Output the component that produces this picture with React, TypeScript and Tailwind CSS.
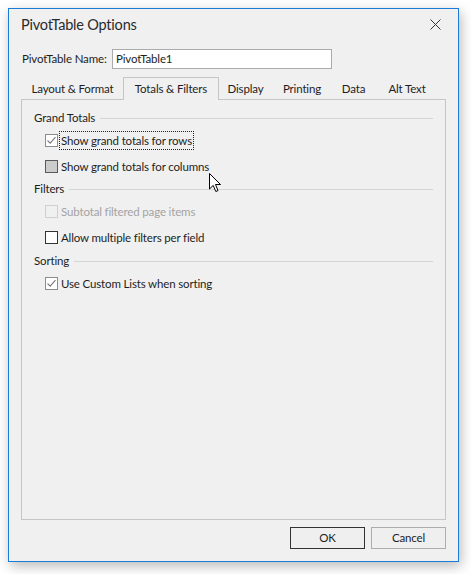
import React from "react";

const font = { fontFamily: 'Lato, "Noto Sans", sans-serif' };

function Check({ color }: { color: string }) {
  return (
    <svg width="11" height="11" viewBox="0 0 11 11" className="block">
      <path d="M1.5 5.5 L4.2 8.2 L9.5 2.2" fill="none" stroke={color} strokeWidth="1.1" />
    </svg>
  );
}

type BoxState = "checked" | "pressed" | "empty" | "disabled";

function CheckRow({
  label,
  state,
  focus,
}: {
  label: string;
  state: BoxState;
  focus?: boolean;
}) {
  const box =
    state === "checked"
      ? "border-[#8c8c8c] bg-white"
      : state === "pressed"
      ? "border-[#5a5a5a] bg-[#cccccc]"
      : state === "disabled"
      ? "border-[#cfcfcf] bg-[#f0f0f0]"
      : "border-[#333333] bg-white";
  return (
    <div className="flex h-[26px] items-center pl-[23px]">
      <div className={`flex h-[13px] w-[13px] items-center justify-center border ${box}`}>
        {state === "checked" && <Check color="#7a7a7a" />}
      </div>
      <span
        className={`ml-[3px] whitespace-nowrap leading-[15px] ${
          focus ? "outline outline-1 outline-dotted outline-[#222] outline-offset-[1px]" : ""
        } ${state === "disabled" ? "text-[#a3a3a3]" : "text-[#1e1e1e]"}`}
      >
        {label}
      </span>
    </div>
  );
}

function Heading({ text, className = "" }: { text: string; className?: string }) {
  return (
    <div className={`flex h-[18px] items-center pl-[12px] pr-[12px] ${className}`}>
      <span className="text-[#1e1e1e]">{text}</span>
      <div className="ml-[5px] h-px flex-1 bg-[#d5d5d5]" />
    </div>
  );
}

function Cursor() {
  return (
    <svg
      width="13"
      height="20"
      viewBox="0 0 13 20"
      className="absolute left-[208.5px] top-[164.5px]"
    >
      <path
        d="M0.5 0.5 L0.5 16 L4.2 12.4 L6.8 18.5 L9 17.6 L6.5 11.5 L11.5 11.5 Z"
        fill="#fff"
        stroke="#000"
        strokeWidth="1"
        strokeLinejoin="miter"
      />
    </svg>
  );
}

export default function App() {
  return (
    <div
      className="relative h-[574px] w-[471px] bg-white text-[11.5px] tracking-[-0.15px]"
      style={font}
    >
      <div className="ml-[8px] mt-[8px] flex h-[554px] w-[451px] flex-col border border-[#1a7cd6] bg-[#f0f0f0] shadow-[2px_4px_12px_rgba(0,0,0,0.28)]">
        {/* title bar */}
        <div className="flex h-[31px] items-center justify-between pl-[12px] pr-[17px]">
          <span className="whitespace-nowrap text-[14.5px] tracking-[-0.2px] text-[#2b2b2b]">
            PivotTable Options
          </span>
          <svg width="11" height="11" viewBox="0 0 11 11">
            <path d="M0.5 0.5 L10.5 10.5 M10.5 0.5 L0.5 10.5" stroke="#333" strokeWidth="1" />
          </svg>
        </div>

        {/* name field */}
        <div className="mt-[9px] flex h-[20px] items-center pl-[13px]">
          <span className="w-[90px] whitespace-nowrap text-[#1e1e1e]">PivotTable Name:</span>
          <div className="flex h-[20px] w-[220px] items-center border border-[#ababab] bg-white pl-[3px] text-[#1e1e1e]">
            PivotTable1
          </div>
        </div>

        {/* tabs */}
        <div className="mt-[8px] flex h-[22px] items-end whitespace-nowrap pl-[13px]">
          <div className="flex h-[20px] w-[101px] items-center justify-center text-[#1e1e1e]">
            Layout &amp; Format
          </div>
          <div className="relative z-10 -mb-px flex h-[23px] w-[96px] items-center justify-center border border-b-0 border-[#c6c6c6] bg-[#f0f0f0] text-[#1e1e1e]">
            Totals &amp; Filters
          </div>
          <div className="flex h-[20px] w-[53px] items-center justify-center text-[#1e1e1e]">Display</div>
          <div className="flex h-[20px] w-[60px] items-center justify-center text-[#1e1e1e]">Printing</div>
          <div className="flex h-[20px] w-[43px] items-center justify-center text-[#1e1e1e]">Data</div>
          <div className="flex h-[20px] w-[64px] items-center justify-center text-[#1e1e1e]">Alt Text</div>
        </div>

        {/* tab panel */}
        <div className="ml-[12px] h-[421px] w-[425px] border border-[#c6c6c6] pt-[9px]">
          <Heading text="Grand Totals" />
          <CheckRow label="Show grand totals for rows" state="checked" focus />
          <CheckRow label="Show grand totals for columns" state="pressed" />
          <Heading text="Filters" className="mt-[1px]" />
          <CheckRow label="Subtotal filtered page items" state="disabled" />
          <CheckRow label="Allow multiple filters per field" state="empty" />
          <Heading text="Sorting" className="mt-[2px]" />
          <CheckRow label="Use Custom Lists when sorting" state="checked" />
        </div>

        {/* buttons */}
        <div className="mt-[7px] flex justify-end gap-[6px] pr-[12px]">
          <button className="flex h-[22px] w-[75px] items-center justify-center border border-[#333] bg-[#efefef] text-[#1e1e1e]">
            OK
          </button>
          <button className="flex h-[22px] w-[75px] items-center justify-center border border-[#adadad] bg-[#efefef] text-[#1e1e1e]">
            Cancel
          </button>
        </div>
      </div>
      <Cursor />
    </div>
  );
}
